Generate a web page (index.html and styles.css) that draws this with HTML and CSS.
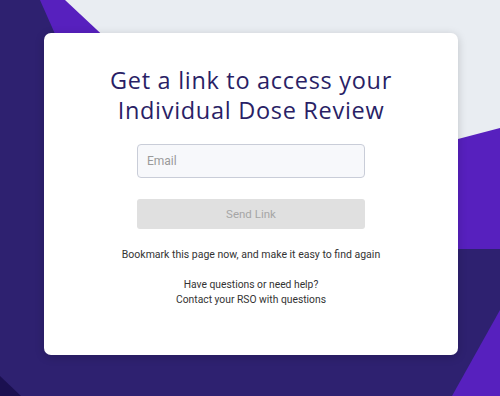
FILE: index.html
```html
<!DOCTYPE html>
<html>
<head>
    <title>Individual Dose Review</title>
    <link rel="stylesheet" href="styles.css">
</head>
<body>
    <svg class="backdrop" viewBox="0 0 500 396" preserveAspectRatio="none">
        <rect width="500" height="396" fill="#2e2170"/>
        <polygon points="40,0 500,0 500,249 150,249" fill="#5720be"/>
        <polygon points="65,0 500,0 500,128 267,189" fill="#e9edf2"/>
        <polygon points="500,310 500,396 452,396" fill="#5720be"/>
        <polygon points="0,376 0,396 21,396" fill="#1b1050"/>
    </svg>

    <div class="card">
        <h1 class="title">Get a link to access your<br>Individual Dose Review</h1>
        <form class="link-form" onsubmit="return false;">
            <input class="email-input" type="email" placeholder="Email">
            <button class="send-btn" type="submit" disabled>Send Link</button>
        </form>
        <p class="note">Bookmark this page now, and make it easy to find again</p>
        <p class="help">Have questions or need help?<br>Contact your RSO with questions</p>
    </div>
</body>
</html>
```

FILE: styles.css
```css
body {
    margin: 0;
    padding: 33px 42px 41px 44px;
    font-family: 'Roboto', sans-serif;
    color: #333;
    position: relative;
    overflow: hidden;
}

.backdrop {
    position: absolute;
    top: 0;
    left: 0;
    width: 500px;
    height: 396px;
    z-index: 0;
}

.card {
    position: relative;
    z-index: 1;
    background: #fff;
    border-radius: 7px;
    height: 322px;
    box-sizing: border-box;
    padding-top: 32px;
    box-shadow: 0 2px 10px rgba(0, 0, 0, 0.18);
    display: flex;
    flex-direction: column;
    align-items: center;
}

.title {
    margin: 0;
    font-family: 'Open Sans', sans-serif;
    font-weight: 500;
    font-size: 23.5px;
    line-height: 30px;
    letter-spacing: 0.7px;
    color: #2a1f66;
    text-align: center;
}

.link-form {
    margin-top: 19px;
    display: flex;
    flex-direction: column;
    gap: 21px;
    width: 228px;
}

.email-input {
    height: 34px;
    box-sizing: border-box;
    border: 1px solid #c9cdd8;
    border-radius: 4px;
    background: #f7f8fb;
    padding: 0 9px;
    font-family: 'Roboto', sans-serif;
    font-size: 12px;
    color: #333;
}

.email-input::placeholder {
    color: #9a9a9a;
}

.send-btn {
    height: 30px;
    border: none;
    border-radius: 3px;
    background: #e0e0e0;
    color: #a6a6a6;
    font-family: 'Roboto', sans-serif;
    font-size: 11.5px;
}

.note {
    margin: 18px 0 0;
    font-size: 10.5px;
    line-height: 15px;
}

.help {
    margin: 15px 0 0;
    font-size: 10.3px;
    line-height: 15px;
    text-align: center;
}
```
